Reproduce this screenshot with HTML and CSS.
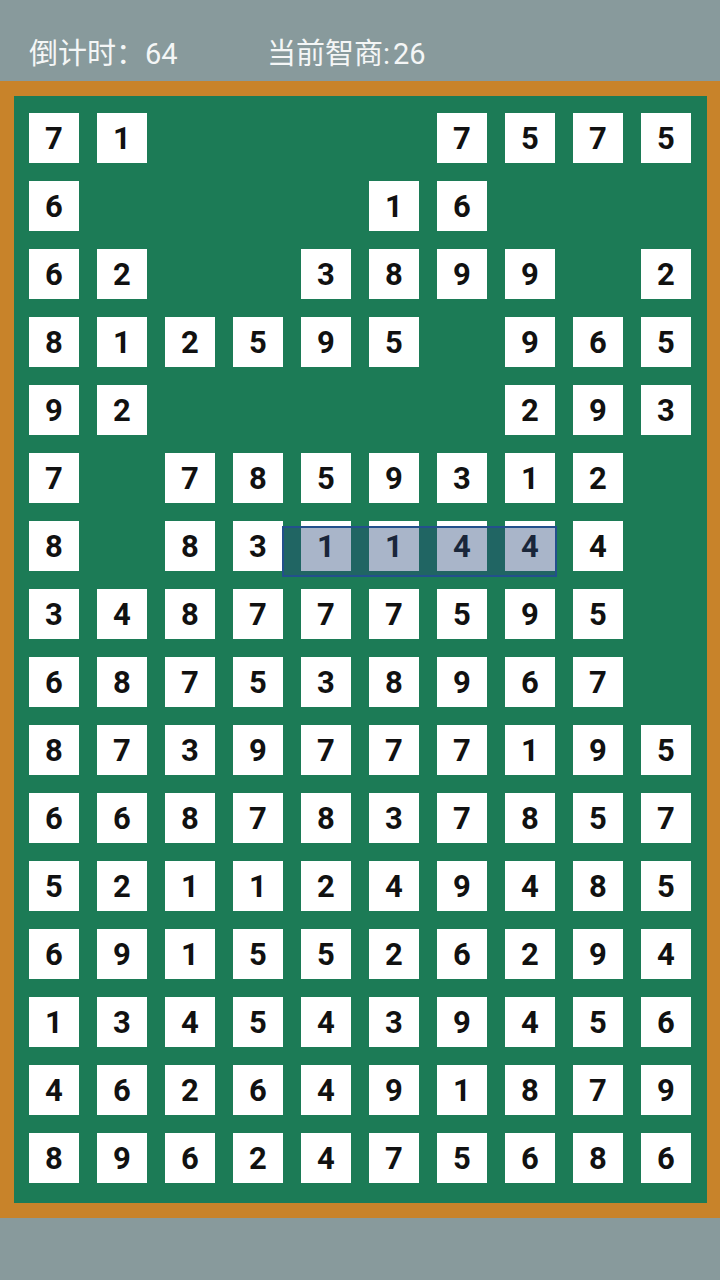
FILE: index.html
```html
<!DOCTYPE html>
<html lang="zh">
<head>
  <meta charset="UTF-8" />
  <meta name="viewport" content="width=device-width, initial-scale=1.0"/>
  <title>数字消除</title>
  <link rel="stylesheet" href="styles.css">
</head>
<body>

  <header class="topbar">
    <span class="timer">倒计时：64</span>
    <span class="score">当前智商:<span class="num">26</span></span>
  </header>

  <div class="frame">
    <div class="board">
      <div class="grid" id="grid"></div>
      <div class="selection"></div>
    </div>
  </div>

  <script>
    const rows = [
      "71    7575",
      "6    16   ",
      "62  3899 2",
      "812595 965",
      "92     293",
      "7 7859312 ",
      "8 8311444 ",
      "348777595 ",
      "687538967 ",
      "8739777195",
      "6687837857",
      "5211249485",
      "6915526294",
      "1345439456",
      "4626491879",
      "8962475686"
    ];

    let html = "";
    rows.forEach(row => {
      for (const ch of row) {
        if (ch === " ") {
          html += `<div class="cell empty"></div>`;
        } else {
          html += `<div class="cell">${ch}</div>`;
        }
      }
    });
    document.getElementById('grid').innerHTML = html;
  </script>
</body>
</html>
```

FILE: styles.css
```css
* {
  box-sizing: border-box;
}

body {
  margin: 0;
  height: 1280px;
  background-color: #889a9c;
  font-family: Roboto, "Noto Sans CJK SC", sans-serif;
}

.topbar {
  height: 81px;
  padding: 38px 0 0 29px;
  display: flex;
  color: #f4f6f6;
  font-size: 29px;
  line-height: 32px;
}

.timer {
  width: 238px;
}

.score .num {
  margin-left: 3px;
}

.frame {
  background-color: #c8832a;
  padding: 15px 13px 15px 14px;
}

.board {
  position: relative;
  background-color: #1c7b56;
  padding: 17px 16px 20px 15px;
}

.grid {
  display: grid;
  grid-template-columns: repeat(10, 50px);
  grid-auto-rows: 50px;
  gap: 18px;
}

.cell {
  background: #fff;
  color: #111;
  font-weight: bold;
  font-size: 31px;
  display: flex;
  align-items: center;
  justify-content: center;
}

.cell.empty {
  background: transparent;
}

.selection {
  position: absolute;
  left: 268px;
  top: 430px;
  width: 275px;
  height: 51px;
  border: 2px solid #23508c;
  background: rgba(40, 70, 120, 0.4);
}
```
